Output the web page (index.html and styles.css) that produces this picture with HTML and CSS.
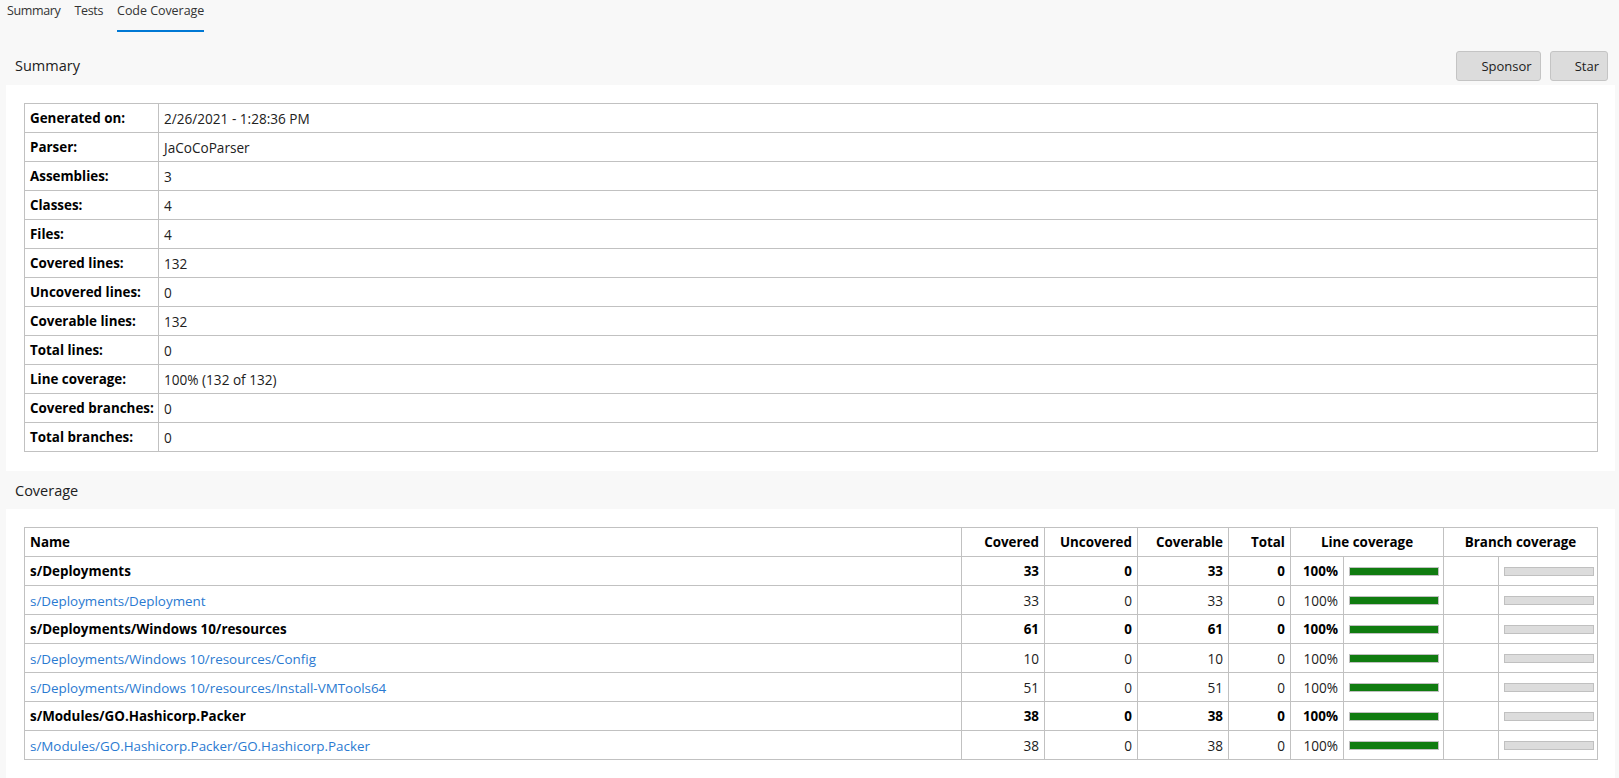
FILE: index.html
```html
<!DOCTYPE html>
<html>
<head>
<meta charset="utf-8">
<link rel="stylesheet" href="styles.css">
</head>
<body>
<div class="page">
  <nav class="tabs">
    <span class="tab">Summary</span>
    <span class="tab">Tests</span>
    <span class="tab active">Code Coverage</span>
  </nav>

  <div class="section-head first">
    <h2 class="section-title">Summary</h2>
    <div class="actions">
      <button class="btn">Sponsor</button>
      <button class="btn">Star</button>
    </div>
  </div>
  <div class="panel">
    <table class="info">
      <colgroup><col class="c-label"><col></colgroup>
      <tbody>
        <tr><th>Generated on:</th><td>2/26/2021 - 1:28:36 PM</td></tr>
        <tr><th>Parser:</th><td>JaCoCoParser</td></tr>
        <tr><th>Assemblies:</th><td>3</td></tr>
        <tr><th>Classes:</th><td>4</td></tr>
        <tr><th>Files:</th><td>4</td></tr>
        <tr><th>Covered lines:</th><td>132</td></tr>
        <tr><th>Uncovered lines:</th><td>0</td></tr>
        <tr><th>Coverable lines:</th><td>132</td></tr>
        <tr><th>Total lines:</th><td>0</td></tr>
        <tr><th>Line coverage:</th><td>100% (132 of 132)</td></tr>
        <tr><th>Covered branches:</th><td>0</td></tr>
        <tr><th>Total branches:</th><td>0</td></tr>
      </tbody>
    </table>
  </div>

  <div class="section-head">
    <h2 class="section-title">Coverage</h2>
  </div>
  <div class="panel">
    <table class="cov">
      <colgroup>
        <col>
        <col class="w-covered">
        <col class="w-uncovered">
        <col class="w-coverable">
        <col class="w-total">
        <col class="w-pct">
        <col class="w-bar">
        <col class="w-bpct">
        <col class="w-bbar">
      </colgroup>
      <thead>
        <tr>
          <th class="left">Name</th>
          <th>Covered</th>
          <th>Uncovered</th>
          <th>Coverable</th>
          <th>Total</th>
          <th class="center" colspan="2">Line coverage</th>
          <th class="center" colspan="2">Branch coverage</th>
        </tr>
      </thead>
      <tbody>
        <tr class="group">
          <td class="left">s/Deployments</td><td>33</td><td>0</td><td>33</td><td>0</td><td>100%</td>
          <td class="barcell"><div class="bar green"></div></td><td></td><td class="barcell"><div class="bar gray"></div></td>
        </tr>
        <tr>
          <td class="left"><a class="link">s/Deployments/Deployment</a></td><td>33</td><td>0</td><td>33</td><td>0</td><td>100%</td>
          <td class="barcell"><div class="bar green"></div></td><td></td><td class="barcell"><div class="bar gray"></div></td>
        </tr>
        <tr class="group">
          <td class="left">s/Deployments/Windows 10/resources</td><td>61</td><td>0</td><td>61</td><td>0</td><td>100%</td>
          <td class="barcell"><div class="bar green"></div></td><td></td><td class="barcell"><div class="bar gray"></div></td>
        </tr>
        <tr>
          <td class="left"><a class="link">s/Deployments/Windows 10/resources/Config</a></td><td>10</td><td>0</td><td>10</td><td>0</td><td>100%</td>
          <td class="barcell"><div class="bar green"></div></td><td></td><td class="barcell"><div class="bar gray"></div></td>
        </tr>
        <tr>
          <td class="left"><a class="link">s/Deployments/Windows 10/resources/Install-VMTools64</a></td><td>51</td><td>0</td><td>51</td><td>0</td><td>100%</td>
          <td class="barcell"><div class="bar green"></div></td><td></td><td class="barcell"><div class="bar gray"></div></td>
        </tr>
        <tr class="group">
          <td class="left">s/Modules/GO.Hashicorp.Packer</td><td>38</td><td>0</td><td>38</td><td>0</td><td>100%</td>
          <td class="barcell"><div class="bar green"></div></td><td></td><td class="barcell"><div class="bar gray"></div></td>
        </tr>
        <tr>
          <td class="left"><a class="link">s/Modules/GO.Hashicorp.Packer/GO.Hashicorp.Packer</a></td><td>38</td><td>0</td><td>38</td><td>0</td><td>100%</td>
          <td class="barcell"><div class="bar green"></div></td><td></td><td class="barcell"><div class="bar gray"></div></td>
        </tr>
      </tbody>
    </table>
  </div>
</div>
</body>
</html>
```
FILE: styles.css
```css
html, body {
  margin: 0;
  padding: 0;
  background: #f8f8f8;
}
body {
  font-family: "Open Sans", "Noto Sans", sans-serif;
  font-size: 13.6px;
  color: #212121;
  height: 778px;
  overflow: hidden;
}
.page {
  padding: 0 4px 0 6px;
}
.tabs {
  display: flex;
  height: 33px;
  margin-left: 1px;
}
.tab {
  font-size: 12.5px;
  color: #333;
  line-height: 21px;
  margin-right: 14px;
  height: 29px;
  box-sizing: border-box;
  border-bottom: 2px solid transparent;
  letter-spacing: -0.35px;
}
.tab.active {
  border-bottom-color: #0078d4;
  height: 32px;
  letter-spacing: -0.05px;
}
.section-head {
  display: flex;
  align-items: center;
  justify-content: space-between;
  height: 38px;
  padding-left: 9px;
  padding-right: 7px;
}
.section-head.first {
  margin-top: 13px;
  height: 39px;
}
.section-title {
  margin: 0;
  font-size: 14.5px;
  font-weight: 400;
  color: #212121;
}
.actions {
  display: flex;
  gap: 9px;
}
.btn {
  font-family: "Open Sans", "Noto Sans", sans-serif;
  font-size: 13px;
  color: #212121;
  background: #dcdcdc;
  border: 1px solid #c4c4c4;
  border-radius: 3px;
  height: 30px;
  padding: 0 8px 0 24px;
  margin: 0;
}
.panel {
  background: #fff;
  padding: 18px 17px 19px 18px;
}
table {
  border-collapse: collapse;
  width: 100%;
  table-layout: fixed;
}
th, td {
  border: 1px solid #c1c1c1;
  height: 29px;
  padding: 0 5px;
  box-sizing: border-box;
  white-space: nowrap;
  overflow: hidden;
}
.info th {
  text-align: left;
  font-weight: 700;
  font-size: 13.4px;
  color: #000;
}
.info td {
  color: #212121;
}
.c-label { width: 134px; }

.cov th {
  font-weight: 700;
  font-size: 13.4px;
  color: #000;
  text-align: right;
}
.cov th.left, .cov td.left { text-align: left; }
.cov th.center { text-align: center; }
.cov td {
  text-align: right;
  color: #212121;
}
.cov tr.group td {
  font-weight: 700;
  font-size: 13.4px;
  color: #000;
}
.link {
  color: #2a7ad1;
  text-decoration: none;
  font-size: 13.4px;
}
.w-covered { width: 83px; }
.w-uncovered { width: 93px; }
.w-coverable { width: 91px; }
.w-total { width: 62px; }
.w-pct { width: 53px; }
.w-bar { width: 100px; }
.w-bpct { width: 55px; }
.w-bbar { width: 99px; }

.cov td.barcell {
  padding: 0 4px 0 5px;
}
.bar {
  height: 9px;
  box-sizing: border-box;
  border: 1px solid #c0c0c0;
  width: 90px;
}
.bar.green { background: #107c10; }
.bar.gray { background: #dcdcdc; }
```
